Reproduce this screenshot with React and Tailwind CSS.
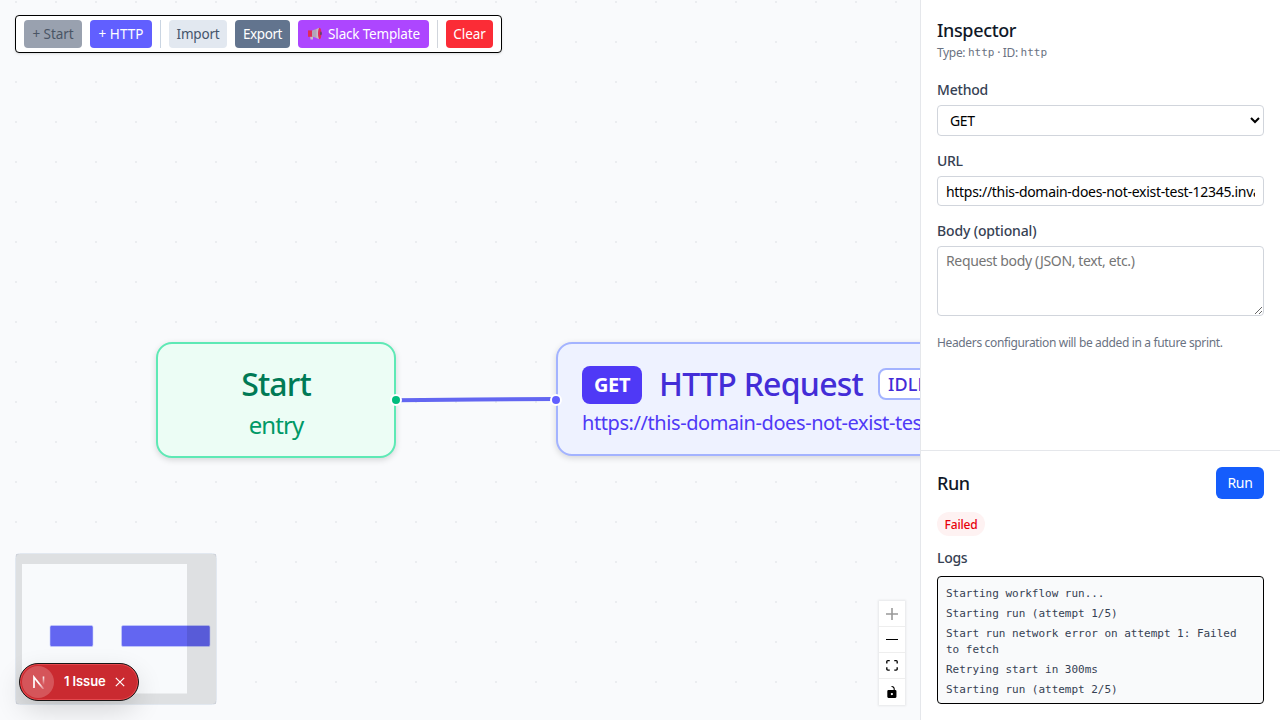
import React from "react";

function ToolButton({ className, children }) {
  return (
    <button className={"flex h-7 items-center justify-center whitespace-nowrap rounded text-[13.5px] " + className}>
      {children}
    </button>
  );
}

function Megaphone() {
  return (
    <svg width="16" height="14" viewBox="0 0 16 14" className="mr-[5px] shrink-0">
      <path d="M3 9h3v3.6H3.6z" fill="#c6bdcc" />
      <path d="M1 3.4h4.5v6.4H1z" fill="#e02d58" />
      <path d="M5 3.6 12.5 1v11L5 9.6z" fill="#b3a5b8" />
      <path d="M9.5 2 12.5 1v11L9.5 11z" fill="#c8bcca" />
      <ellipse cx="12.7" cy="6.5" rx="1.7" ry="5.8" fill="#e02d58" />
      <ellipse cx="13.9" cy="6.4" rx="0.9" ry="1.8" fill="#5c4569" />
    </svg>
  );
}

function Toolbar() {
  return (
    <div className="absolute left-[15px] top-[15px] flex h-[38px] w-[487px] items-center gap-2 rounded border border-black bg-white px-2 shadow-sm">
      <ToolButton className="w-[58px] bg-[#99a1af] tracking-[-0.05px] text-[#4a5565]">+ Start</ToolButton>
      <ToolButton className="w-[62px] bg-[#615fff] tracking-[0.05px] text-white">+ HTTP</ToolButton>
      <span className="h-7 w-px bg-[#cad5e2]" />
      <ToolButton className="w-[58px] bg-[#e2e8f0] tracking-[-0.2px] text-[#45556c]">Import</ToolButton>
      <ToolButton className="w-[55px] bg-[#62748e] tracking-[-0.4px] text-white">Export</ToolButton>
      <ToolButton className="w-[131px] bg-[#ad46ff] tracking-[-0.18px] text-white">
        <Megaphone />
        Slack Template
      </ToolButton>
      <span className="h-7 w-px bg-[#d1d5dc]" />
      <ToolButton className="w-[47px] bg-[#fb2c36] tracking-[-0.1px] text-white">Clear</ToolButton>
    </div>
  );
}

function Handle({ className }) {
  return <span className={"absolute h-3 w-3 rounded-full border-2 border-white " + className} />;
}

function Flow() {
  return (
    <>
      <svg className="absolute left-[396px] top-[390px]" width="160" height="20">
        <path d="M0 10.2C60 10.2 100 9 160 9" stroke="#6366f1" strokeWidth="4" fill="none" />
      </svg>
      <div className="absolute left-[156px] top-[342px] flex h-[116px] w-60 flex-col items-center rounded-2xl border-2 border-[#5ee9b5] bg-[#ecfdf5] pt-5 shadow-[0_2px_6px_rgba(0,0,0,0.15)]">
        <span className="text-[32px] font-medium leading-10 tracking-[-0.85px] text-[#007a55]">Start</span>
        <span className="mt-[3px] text-[24px] leading-9 tracking-[-0.95px] text-[#009966]">entry</span>
        <Handle className="-right-[8px] top-[50px] bg-[#00bc7d]" />
      </div>
      <div className="absolute left-[556px] top-[342px] h-[114px] w-[496px] rounded-2xl border-2 border-[#a3b3ff] bg-[#eef2ff] px-6 pt-[22px] shadow-[0_2px_6px_rgba(0,0,0,0.15)]">
        <div className="flex h-[38px] items-center">
          <span className="flex h-[38px] w-[60px] items-center justify-center rounded-lg bg-[#4f39f6] text-[20px] font-bold tracking-[-0.35px] text-white">
            GET
          </span>
          <span className="-mt-0.5 ml-[17px] w-[204px] whitespace-nowrap text-[32px] font-medium leading-10 tracking-[-0.75px] text-[#432dd7]">
            HTTP Request
          </span>
          <span className="-mt-0.5 ml-[15px] flex h-8 w-[66px] items-center rounded-lg border-2 border-[#a3b3ff] bg-white pl-2 text-[18px] font-medium tracking-[0.1px] text-[#432dd7]">
            IDLE
          </span>
        </div>
        <div className="mt-[3px] w-[440px] whitespace-nowrap text-[20px] leading-8 tracking-[-0.42px] text-[#4f39f6]">
          https://this-domain-does-not-exist-test
        </div>
        <Handle className="-left-[8px] top-[50px] bg-[#615fff]" />
      </div>
    </>
  );
}

function Minimap() {
  return (
    <svg className="absolute left-[15px] top-[553px]" width="202" height="152">
      <rect x="0.5" y="0.5" width="201" height="151" rx="4" fill="#f8fafc" stroke="#e2e8f0" />
      <rect x="35" y="72.5" width="43" height="21" rx="1.5" fill="#6366f1" stroke="#c7d0fb" strokeWidth="0.6" />
      <rect x="106.5" y="72.5" width="88.5" height="21" rx="1.5" fill="#6366f1" stroke="#c7d0fb" strokeWidth="0.6" />
      <path d="M1 1h200v150H1zM7 11v129.500h165V11z" fill="#000" fillOpacity="0.1" fillRule="evenodd" />
    </svg>
  );
}

function IssueBadge() {
  return (
    <div className="absolute left-[19px] top-[663px] flex h-[38px] w-[120px] items-center rounded-full border border-[#171717] bg-[#ca2a30] pl-0.5 text-white shadow-[inset_0_0_0_1px_#e5484d,0_10px_28px_-2px_rgba(0,0,0,0.16)]">
      <span className="flex h-8 w-8 items-center justify-center rounded-full bg-[#d5555a]">
        <svg width="14" height="14" viewBox="0 0 14 14" fill="none" className="ml-px">
          <defs>
            <linearGradient id="letterFade" x1="7" y1="8" x2="12" y2="14" gradientUnits="userSpaceOnUse">
              <stop stopColor="#fff" />
              <stop offset="1" stopColor="#fff" stopOpacity="0.2" />
            </linearGradient>
            <linearGradient id="stemFade" x1="0" y1="1" x2="0" y2="10" gradientUnits="userSpaceOnUse">
              <stop stopColor="#fff" />
              <stop offset="1" stopColor="#fff" stopOpacity="0" />
            </linearGradient>
          </defs>
          <path d="M2 13V2.200L11.500 14" stroke="url(#letterFade)" strokeWidth="1.700" />
          <path d="M11.500 1.500v9" stroke="url(#stemFade)" strokeWidth="1.600" />
        </svg>
      </span>
      <span className="ml-[10px] w-[43px] whitespace-nowrap font-['Inter','Liberation_Sans',sans-serif] text-[13px] font-semibold tracking-[-0.1px]">
        1 Issue
      </span>
      <svg width="10" height="10" viewBox="0 0 10 10" className="ml-2" stroke="#fff" strokeWidth="1.200">
        <path d="M0.800 0.800 9.200 9.200M9.200 0.800 0.800 9.200" />
      </svg>
    </div>
  );
}

function Controls() {
  return (
    <div className="absolute left-[879px] top-[601px] flex w-[26px] flex-col bg-white shadow-[0_0_2px_1px_rgba(0,0,0,0.08)]">
      <button className="flex h-[26px] items-center justify-center border-b border-[#eee]">
        <svg width="12" height="12" viewBox="0 0 32 32" fill="#999">
          <path d="M32 18.133H18.133V32h-4.266V18.133H0v-4.266h13.867V0h4.266v13.867H32z" />
        </svg>
      </button>
      <button className="flex h-[26px] items-start justify-center border-b border-[#eee] pt-3">
        <svg width="12" height="1" viewBox="0 0 12 1">
          <path d="M0 0h12v1H0z" />
        </svg>
      </button>
      <button className="flex h-[26px] items-center justify-center border-b border-[#eee]">
        <svg width="12" height="11" viewBox="0 0 32 30">
          <path d="M3.692 4.630c0-.530.400-.938.939-.938h5.215V0H4.708C2.130 0 0 2.054 0 4.630v5.216h3.692V4.631zM27.354 0h-5.200v3.692h5.170c.530 0 .984.400.984.939v5.215H32V4.631A4.624 4.624 0 0027.354 0zm.954 24.830c0 .532-.400.940-.939.940h-5.215v3.768h5.215c2.577 0 4.631-2.130 4.631-4.707v-5.139h-3.692v5.139zm-23.677.940c-.531 0-.939-.400-.939-.940v-5.138H0v5.139c0 2.577 2.130 4.707 4.708 4.707h5.138V25.770H4.631z" />
        </svg>
      </button>
      <button className="flex h-[26px] items-center justify-center">
        <svg width="10" height="12" viewBox="0 0 25 32">
          <path d="M21.333 10.667H19.810V7.619C19.810 3.429 16.380 0 12.190 0c-4.114 1.828-1.370 2.133.305 2.438 1.676.305 4.420 2.590 4.420 5.181v3.048H3.047A3.056 3.056 0 000 13.714v15.238A3.056 3.056 0 003.048 32h18.285a3.056 3.056 0 003.048-3.048V13.714a3.056 3.056 0 00-3.048-3.047zM12.190 24.533a3.056 3.056 0 01-3.047-3.047 3.056 3.056 0 013.047-3.048 3.056 3.056 0 013.048 3.048 3.056 3.056 0 01-3.048 3.047z" />
        </svg>
      </button>
    </div>
  );
}

function Inspector() {
  return (
    <section className="flex h-[450px] flex-col px-4 pt-[17px]">
      <h2 className="text-[18px] font-medium leading-[26px] tracking-[-0.35px] text-[#101828]">Inspector</h2>
      <p className="mt-px flex h-[18px] items-center whitespace-pre text-[12px] tracking-[-0.35px] text-[#6a7282]">
        {"Type: "}
        <span className="font-['DejaVu_Sans_Mono',monospace] text-[11px] tracking-[0px]">http</span>
        {" · ID: "}
        <span className="font-['DejaVu_Sans_Mono',monospace] text-[11px] tracking-[0px]">http</span>
      </p>
      <label className="mt-[18px] text-sm font-medium leading-5 tracking-[-0.2px] text-[#364153]">Method</label>
      <select className="mt-[5px] h-[31px] shrink-0 rounded border border-[#d1d5dc] bg-white px-2 text-sm tracking-[-0.4px] text-black">
        <option>GET</option>
      </select>
      <label className="mt-[15px] text-sm font-medium leading-5 tracking-[-0.35px] text-[#364153]">URL</label>
      <input
        className="mt-[5px] h-[30px] shrink-0 rounded border border-[#d1d5dc] bg-white px-2 text-sm tracking-[-0.3px] text-black"
        defaultValue="https://this-domain-does-not-exist-test-12345.invalid"
      />
      <label className="mt-[15px] text-sm font-medium leading-5 tracking-[-0.15px] text-[#364153]">Body (optional)</label>
      <textarea
        className="mt-[5px] h-[70px] shrink-0 resize rounded border border-[#d1d5dc] bg-white px-2 py-1 text-sm tracking-[-0.36px] placeholder:text-[#757575]"
        placeholder="Request body (JSON, text, etc.)"
      />
      <p className="mt-[19px] whitespace-nowrap text-[12px] leading-4 tracking-[-0.35px] text-[#6a7282]">
        Headers configuration will be added in a future sprint.
      </p>
    </section>
  );
}

const LOGS = [
  "Starting workflow run...",
  "Starting run (attempt 1/5)",
  "Start run network error on attempt 1: Failed to fetch",
  "Retrying start in 300ms",
  "Starting run (attempt 2/5)",
];

function RunPanel() {
  return (
    <section className="flex h-[270px] flex-col items-start border-t border-[#e5e7eb] px-4 pt-4">
      <div className="flex w-full items-center justify-between">
        <h2 className="text-[18px] font-medium tracking-[-0.5px] text-[#101828]">Run</h2>
        <button className="h-8 w-12 rounded-md bg-[#155dfc] text-sm tracking-[-0.3px] text-white">Run</button>
      </div>
      <span className="mt-[13px] flex h-6 w-12 items-center justify-center rounded-full bg-[#fef2f2] pt-px text-[12px] font-medium tracking-[-0.2px] text-[#e7000b]">
        Failed
      </span>
      <h3 className="mt-3 text-sm font-medium leading-5 tracking-[-0.3px] text-[#364153]">Logs</h3>
      <div className="mt-2 h-32 w-full space-y-1 overflow-hidden rounded border border-black bg-[#f9fafb] px-2 pt-[9px] font-['DejaVu_Sans_Mono',monospace] text-[11px] leading-4 tracking-[-0.02px] text-[#364153]">
        {LOGS.map((line) => (
          <div key={line}>{line}</div>
        ))}
      </div>
    </section>
  );
}

export default function App() {
  return (
    <div className="flex h-[720px] w-[1280px] overflow-hidden bg-white font-['Noto_Sans','Open_Sans',sans-serif]">
      <main className="relative w-[920px] shrink-0 overflow-hidden bg-[#f9fafc]">
        <svg className="absolute inset-0" width="920" height="720">
          <pattern id="canvasDots" x="-4" y="-18" width="40" height="40" patternUnits="userSpaceOnUse">
            <rect x="19" y="19" width="2" height="2" fill="#ebedf0" />
          </pattern>
          <rect width="920" height="720" fill="url(#canvasDots)" />
        </svg>
        <Flow />
        <Toolbar />
        <Minimap />
        <Controls />
        <IssueBadge />
      </main>
      <aside className="flex w-[360px] flex-col border-l border-[#e5e7eb]">
        <Inspector />
        <RunPanel />
      </aside>
    </div>
  );
}
